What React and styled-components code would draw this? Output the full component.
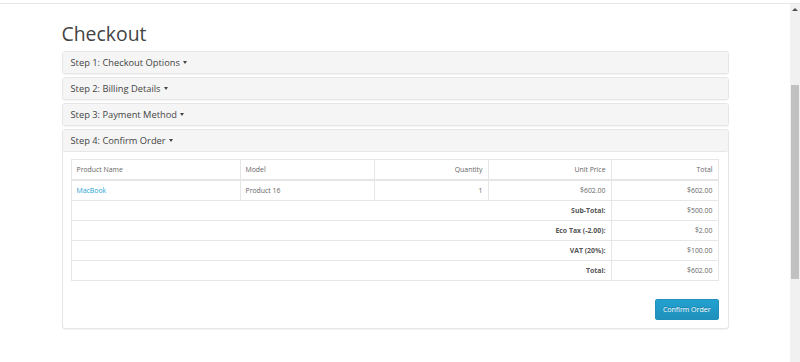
import React from 'react';
import styled, { createGlobalStyle } from 'styled-components';

const GlobalStyle = createGlobalStyle`
    html, body {
        margin: 0;
        padding: 0;
        background: #fff;
    }
    body {
        font-family: "Open Sans", "DejaVu Sans", sans-serif;
        color: #666;
    }
`;

const steps = ["Step 1: Checkout Options", "Step 2: Billing Details", "Step 3: Payment Method"];

const totals = [
    { label: "Sub-Total:", value: "$500.00" },
    { label: "Eco Tax (-2.00):", value: "$2.00" },
    { label: "VAT (20%):", value: "$100.00" },
    { label: "Total:", value: "$602.00" },
];

export default function App() {
    return (
        <Window>
            <GlobalStyle />
            <TopStrip />
            <Body>
                <Content>
                    <Container>
                        <Title>Checkout</Title>
                        {steps.map((s) => (
                            <Panel key={s}>
                                <PanelHeading>{s} <Caret /></PanelHeading>
                            </Panel>
                        ))}
                        <Panel>
                            <PanelHeading $open>Step 4: Confirm Order <Caret /></PanelHeading>
                            <PanelBody>
                                <Table>
                                    <colgroup>
                                        <col style={{ width: 169 }} />
                                        <col style={{ width: 134 }} />
                                        <col style={{ width: 114 }} />
                                        <col style={{ width: 123 }} />
                                        <col />
                                    </colgroup>
                                    <thead>
                                        <tr>
                                            <Th>Product Name</Th>
                                            <Th>Model</Th>
                                            <Th $right>Quantity</Th>
                                            <Th $right>Unit Price</Th>
                                            <Th $right>Total</Th>
                                        </tr>
                                    </thead>
                                    <tbody>
                                        <tr>
                                            <Td><ProductLink href="#">MacBook</ProductLink></Td>
                                            <Td>Product 16</Td>
                                            <Td $right>1</Td>
                                            <Td $right>$602.00</Td>
                                            <Td $right>$602.00</Td>
                                        </tr>
                                        {totals.map((t) => (
                                            <tr key={t.label}>
                                                <Td $right $bold colSpan={4}>{t.label}</Td>
                                                <Td $right>{t.value}</Td>
                                            </tr>
                                        ))}
                                    </tbody>
                                </Table>
                                <Buttons>
                                    <ConfirmButton>Confirm Order</ConfirmButton>
                                </Buttons>
                            </PanelBody>
                        </Panel>
                    </Container>
                </Content>
                <ScrollBar>
                    <ScrollArrow />
                    <ScrollThumb />
                </ScrollBar>
            </Body>
        </Window>
    );
}

const Window = styled.div`
    width: 800px;
    height: 362px;
    display: flex;
    flex-direction: column;
    overflow: hidden;
`;

const TopStrip = styled.div`
    height: 3px;
    border-bottom: 1px solid #e6e6e6;
    flex-shrink: 0;
`;

const Body = styled.div`
    flex: 1;
    display: flex;
    min-height: 0;
`;

const Content = styled.div`
    flex: 1;
`;

const Container = styled.div`
    width: 667px;
    margin: 0 auto;
`;

const Title = styled.h1`
    margin: 17px 0 4px;
    font-size: 19.4px;
    font-weight: 400;
    line-height: 26px;
    color: #444;
`;

const Panel = styled.div`
    border: 1px solid #e6e6e6;
    border-radius: 3px;
    margin-bottom: 3px;
    background: #fff;
    box-shadow: 0 1px 1px rgba(0, 0, 0, 0.05);
`;

const PanelHeading = styled.div`
    background: #f5f5f5;
    padding: 0 8px;
    height: 21px;
    display: flex;
    align-items: center;
    gap: 3px;
    font-size: 9.3px;
    color: #444;
    border-radius: 2px;
    border-bottom: ${(p) => (p.$open ? "1px solid #e6e6e6" : "none")};
`;

const Caret = styled.span`
    display: inline-block;
    width: 0;
    height: 0;
    border-top: 3px solid #444;
    border-left: 2.5px solid transparent;
    border-right: 2.5px solid transparent;
`;

const PanelBody = styled.div`
    padding: 7px 9px 8px 8px;
`;

const Table = styled.table`
    width: 100%;
    table-layout: fixed;
    border-collapse: collapse;
    border: 1px solid #e6e6e6;
    font-size: 6.9px;
    margin-bottom: 18px;
`;

const Th = styled.td`
    border: 1px solid #e6e6e6;
    border-bottom-width: 2px;
    height: 19px;
    padding: 0 5px;
    color: #666;
    text-align: ${(p) => (p.$right ? "right" : "left")};
`;

const Td = styled.td`
    border: 1px solid #e6e6e6;
    height: 19px;
    padding: 0 5px;
    color: ${(p) => (p.$bold ? "#555" : "#666")};
    font-weight: ${(p) => (p.$bold ? 700 : 400)};
    text-align: ${(p) => (p.$right ? "right" : "left")};
`;

const ProductLink = styled.a`
    color: #23a1d1;
    text-decoration: none;
`;

const Buttons = styled.div`
    display: flex;
    justify-content: flex-end;
`;

const ConfirmButton = styled.button`
    font-family: inherit;
    font-size: 7px;
    color: #fff;
    height: 21px;
    padding: 0 7px;
    border: 1px solid #1f90bb;
    border-radius: 2px;
    background: linear-gradient(to bottom, #23a1d1, #1f90bb);
    text-shadow: 0 -1px 0 rgba(0, 0, 0, 0.25);
`;

const ScrollBar = styled.div`
    width: 10px;
    background: #f1f1f1;
    display: flex;
    flex-direction: column;
    align-items: center;
`;

const ScrollArrow = styled.span`
    margin-top: 4px;
    width: 0;
    height: 0;
    border-bottom: 3px solid #505050;
    border-left: 3px solid transparent;
    border-right: 3px solid transparent;
`;

const ScrollThumb = styled.div`
    margin-top: 74px;
    width: 8px;
    height: 194px;
    background: #c1c1c1;
`;
